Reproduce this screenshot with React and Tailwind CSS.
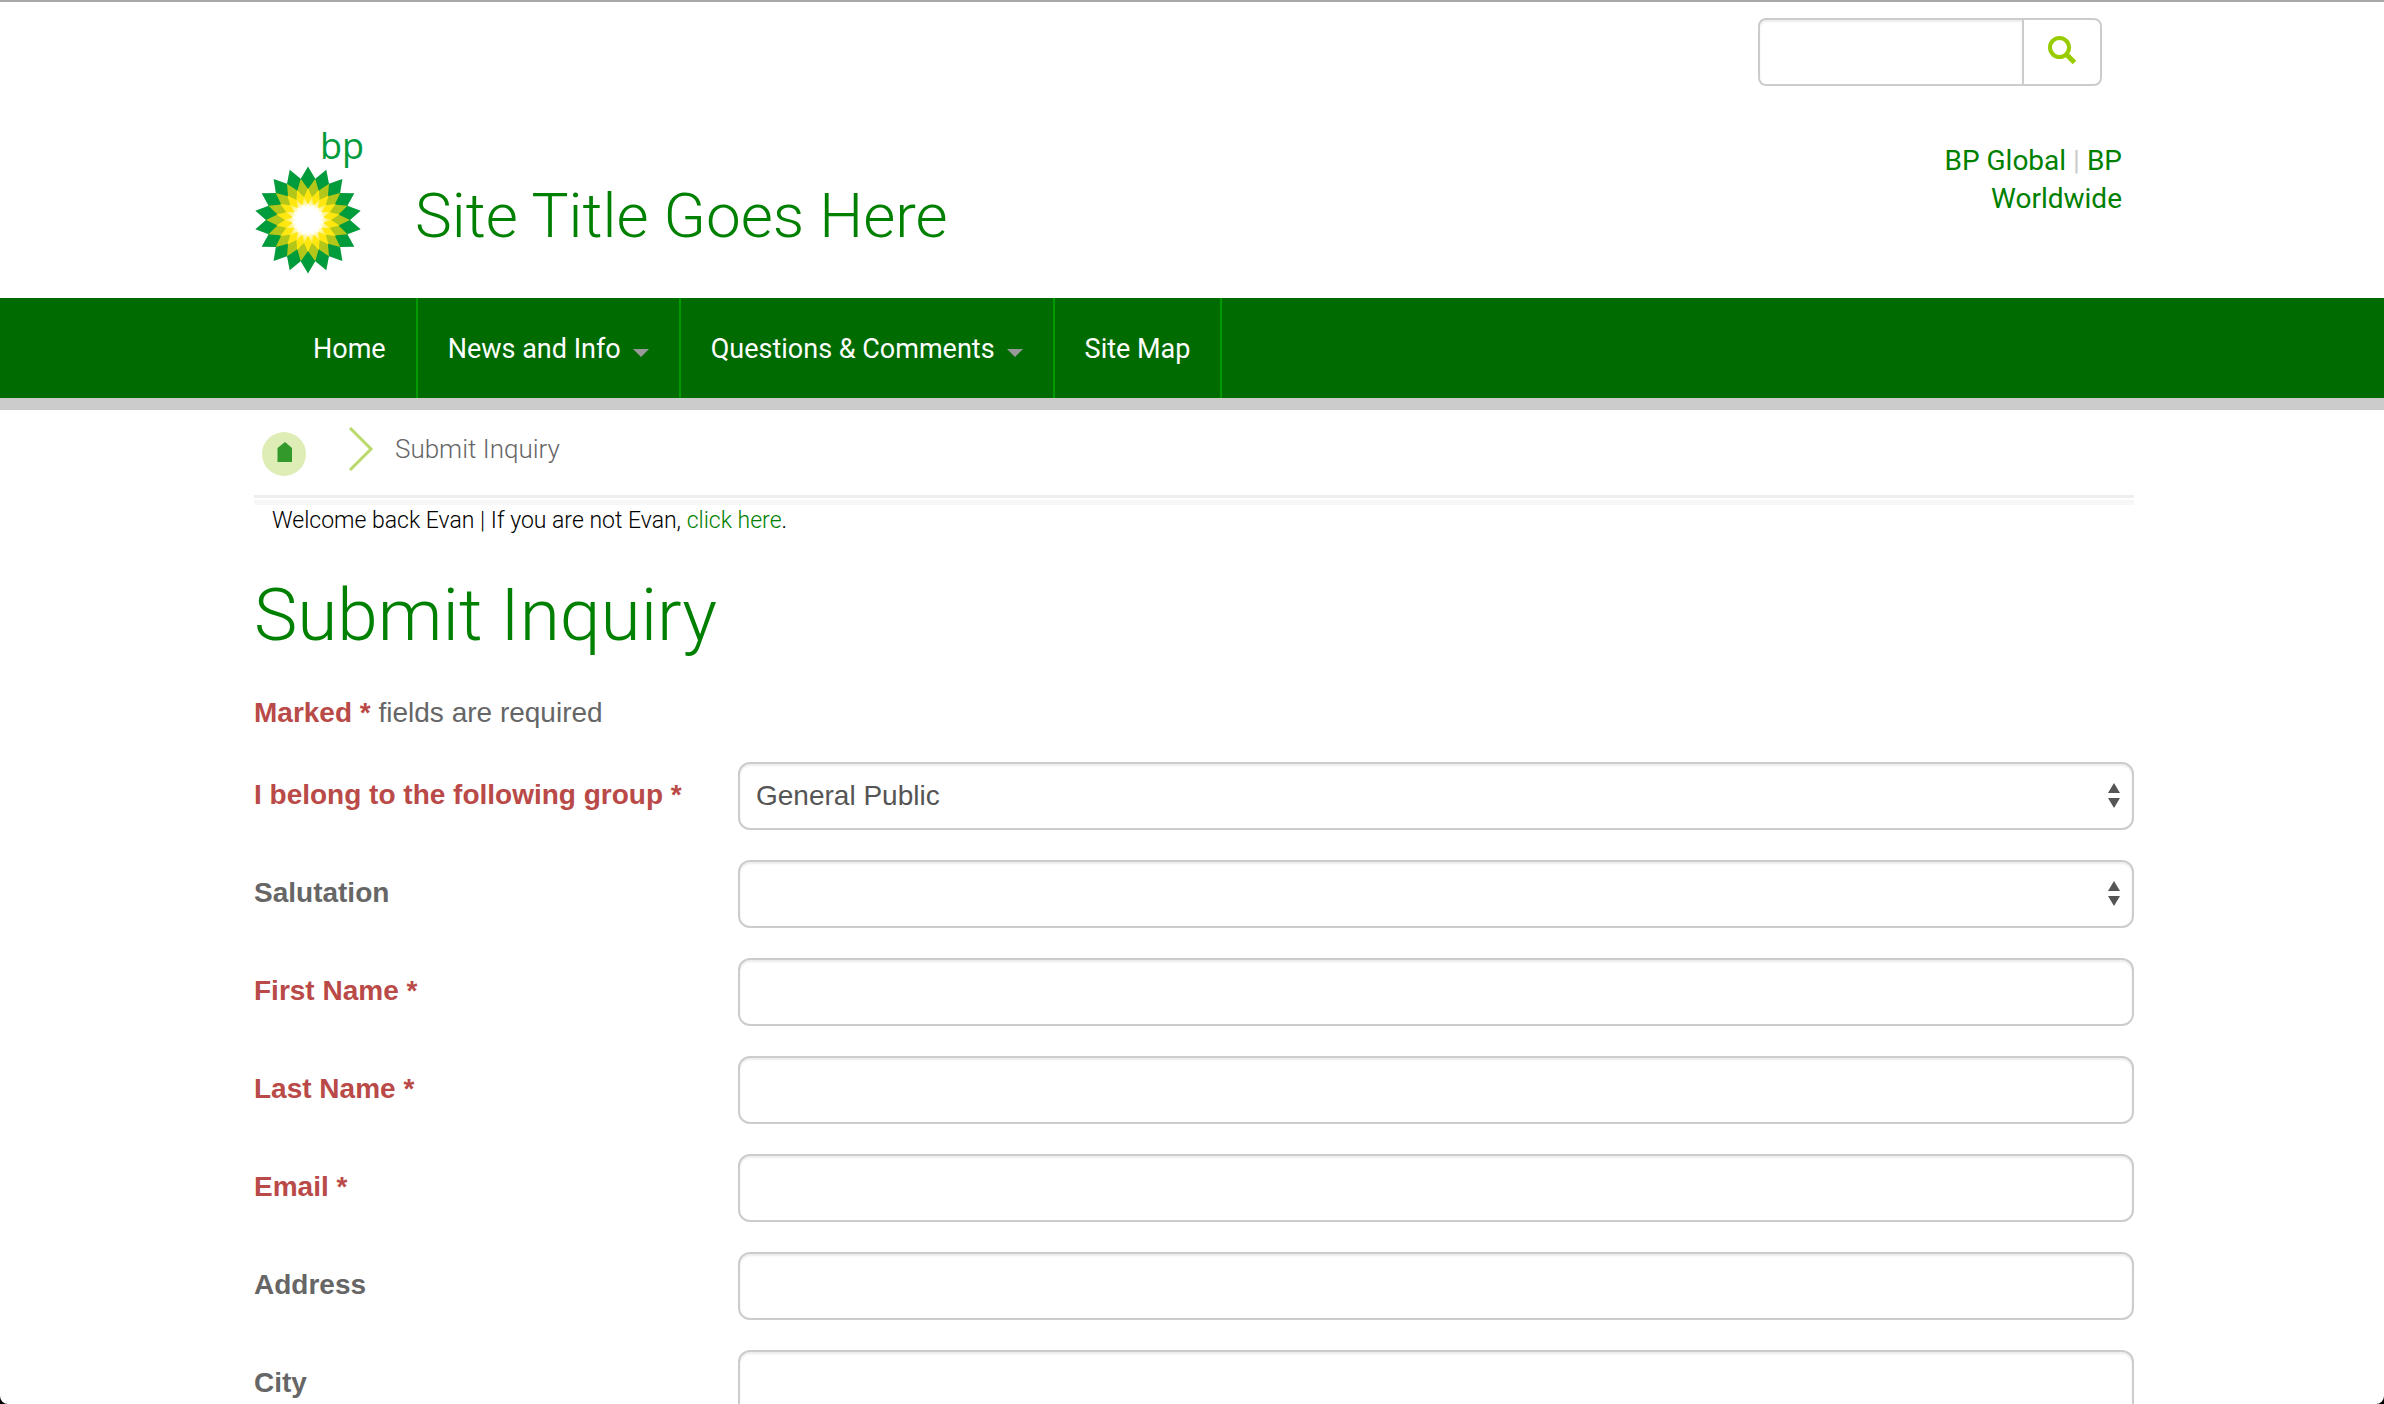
import React from "react";

const star = (outer, inner, offset) =>
  Array.from({ length: 36 }, (_, i) => {
    const r = i % 2 ? inner : outer;
    const a = ((i * 10 + offset) * Math.PI) / 180;
    return `${(54 + r * Math.sin(a)).toFixed(2)},${(54 - r * Math.cos(a)).toFixed(2)}`;
  }).join(" ");

const LAYERS = [
  { id: "green", points: star(53.5, 42, 0), fill: "#009b3a" },
  { id: "lime", points: star(42, 31, 10), fill: "#b2c71a" },
  { id: "yellow", points: star(32, 23, 0), fill: "#ffe70f" },
  { id: "pale", points: star(24, 15, 10), fill: "url(#glow)" },
  { id: "white", points: star(17, 11, 0), fill: "#ffffff" },
];

function Logo() {
  return (
    <a href="#home" aria-label="bp home" className="flex w-[110px] flex-col">
      <span className="flex h-10 items-end justify-end font-['Open_Sans',sans-serif] text-[36px] leading-10 font-medium text-[#009b3a]">
        bp
      </span>
      <svg viewBox="0 0 108 108" className="size-[108px]" aria-hidden="true">
        <defs>
          <radialGradient id="glow" gradientUnits="userSpaceOnUse" cx="54" cy="54" r="24">
            <stop offset="0.5" stopColor="#ffffff" />
            <stop offset="1" stopColor="#ffec2a" />
          </radialGradient>
        </defs>
        {LAYERS.map((l) => (
          <polygon key={l.id} points={l.points} fill={l.fill} />
        ))}
      </svg>
    </a>
  );
}

function SearchForm() {
  return (
    <form role="search" className="flex h-[68px] w-[344px]" onSubmit={(e) => e.preventDefault()}>
      <input
        type="text"
        aria-label="Search"
        className="min-w-0 flex-1 rounded-l-lg border-2 border-r-0 border-[#ccc] bg-white px-6 text-[28px] text-[#555] shadow-[inset_0_2px_2px_rgba(0,0,0,0.075)]"
      />
      <button
        type="submit"
        aria-label="Submit search"
        className="flex w-20 items-center justify-center rounded-r-lg border-2 border-[#ccc] bg-white pb-1"
      >
        <svg viewBox="0 0 28 28" className="size-7" fill="none" stroke="#9c0" aria-hidden="true">
          <circle cx="11.5" cy="11.5" r="9.5" strokeWidth="4" />
          <path d="M18 18l8.500 8.500" strokeWidth="5" />
        </svg>
      </button>
    </form>
  );
}

function Caret() {
  return (
    <svg viewBox="0 0 16 8" className="mt-2 ml-3 h-2 w-4" aria-hidden="true">
      <path d="M0 0h16l-8 8z" fill="#999" />
    </svg>
  );
}

const NAV = [
  { label: "Home" },
  { label: "News and Info", menu: true },
  { label: "Questions & Comments", menu: true },
  { label: "Site Map" },
];

const FIELDS = [
  { id: "group", label: "I belong to the following group *", required: true, options: ["General Public"] },
  { id: "salutation", label: "Salutation", options: [""] },
  { id: "first", label: "First Name *", required: true },
  { id: "last", label: "Last Name *", required: true },
  { id: "email", label: "Email *", required: true },
  { id: "address", label: "Address" },
  { id: "city", label: "City" },
];

const CONTROL =
  "h-[68px] w-full appearance-none rounded-xl border-2 border-[#ccc] bg-white px-4 text-[28px] text-[#555] shadow-[inset_0_2px_2px_rgba(0,0,0,0.075)]";

function Field({ field }) {
  return (
    <div className="flex">
      <label
        htmlFor={field.id}
        className={`w-[484px] shrink-0 pt-[13px] text-[28px] leading-10 font-bold ${field.required ? "text-[#b94a48]" : "text-[#666]"}`}
      >
        {field.label}
      </label>
      {field.options ? (
        <div className="relative flex-1">
          <select id={field.id} className={CONTROL}>
            {field.options.map((o) => (
              <option key={o}>{o}</option>
            ))}
          </select>
          <svg viewBox="0 0 12 25" className="pointer-events-none absolute top-[21px] right-[14px] h-[25px] w-3" fill="#555" aria-hidden="true">
            <path d="M6 0l6 10H0zM6 25l6-10H0z" />
          </svg>
        </div>
      ) : (
        <input id={field.id} type="text" className={`${CONTROL} flex-1`} />
      )}
    </div>
  );
}

export default function App() {
  return (
    <div className="bg-black">
      <div className="h-screen overflow-hidden rounded-b-lg border-t-2 border-[#a8a8a8] bg-white pl-1 font-['Liberation_Sans',Arial,sans-serif]">
        <header className="mx-auto w-full max-w-[1880px] font-['Roboto',sans-serif]">
          <div className="flex justify-end pt-4 pr-8">
            <SearchForm />
          </div>
          <div className="flex h-[212px] items-start justify-between pt-10 pr-3">
            <div className="flex">
              <Logo />
              <p className="pt-[54px] pl-[51px] text-[62px] leading-[72px] font-[350] text-[#008000]">Site Title Goes Here</p>
            </div>
            <p className="w-[200px] pt-4 text-right text-[28px] leading-[38px] text-[#008000]">
              <a href="#global">BP Global</a> <span className="text-[#ccc]">|</span> <a href="#worldwide">BP Worldwide</a>
            </p>
          </div>
        </header>

        <nav className="-ml-1 border-b-12 border-[#ccc] bg-[#006b00] pl-1 font-['Roboto',sans-serif]">
          <ul className="mx-auto flex h-[100px] w-full max-w-[1880px] pl-[29px]">
            {NAV.map((item) => (
              <li key={item.label} className="flex border-r-2 border-[#090]">
                <a href="#nav" className="flex items-center px-[30px] pt-0.5 text-[27px] leading-8 text-white">
                  {item.label}
                  {item.menu && <Caret />}
                </a>
              </li>
            ))}
          </ul>
        </nav>

        <main className="mx-auto w-full max-w-[1880px]">
          <div className="flex h-[84px] items-start font-['Roboto',sans-serif]">
            <a href="#home" aria-label="Home" className="mt-[22px] ml-2">
              <svg viewBox="0 0 44 44" className="size-11" aria-hidden="true">
                <circle cx="22" cy="22" r="22" fill="#deedb5" />
                <path d="M15.500 30V16l7.500-6 7 6v14z" fill="#33992b" />
              </svg>
            </a>
            <svg viewBox="0 0 26 44" className="mt-[17px] ml-[42px] h-11 w-[26px]" fill="none" stroke="#bada6b" strokeWidth="3" aria-hidden="true">
              <path d="M2 1l21 21L2 43" />
            </svg>
            <span className="mt-[23px] ml-[21px] text-[26px] leading-8 font-[350] text-[#666]">Submit Inquiry</span>
          </div>
          <div className="flex h-3 flex-col gap-0.5 pt-px">
            <div className="h-[3px] bg-[#eeeeee]" />
            <div className="h-[5px] bg-[#f7f7f7]" />
          </div>
          <p className="pt-px pl-[18px] font-['Roboto',sans-serif] text-[23px] leading-7 font-light text-black">
            Welcome back <span className="font-[350]">Evan</span> | If you are not Evan,{" "}
            <a href="#switch" className="font-[350] text-[#008000]">click here</a>.
          </p>
          <h1 className="pt-9 font-['Roboto',sans-serif] text-[73px] leading-[88px] font-[350] text-[#008000]">Submit Inquiry</h1>
          <p className="pt-[34px] text-[28px] leading-10 text-[#666]">
            <strong className="text-[#b94a48]">Marked *</strong> fields are required
          </p>
          <form className="flex flex-col gap-[30px] pt-[29px]">
            {FIELDS.map((f) => (
              <Field key={f.id} field={f} />
            ))}
          </form>
        </main>
      </div>
    </div>
  );
}
